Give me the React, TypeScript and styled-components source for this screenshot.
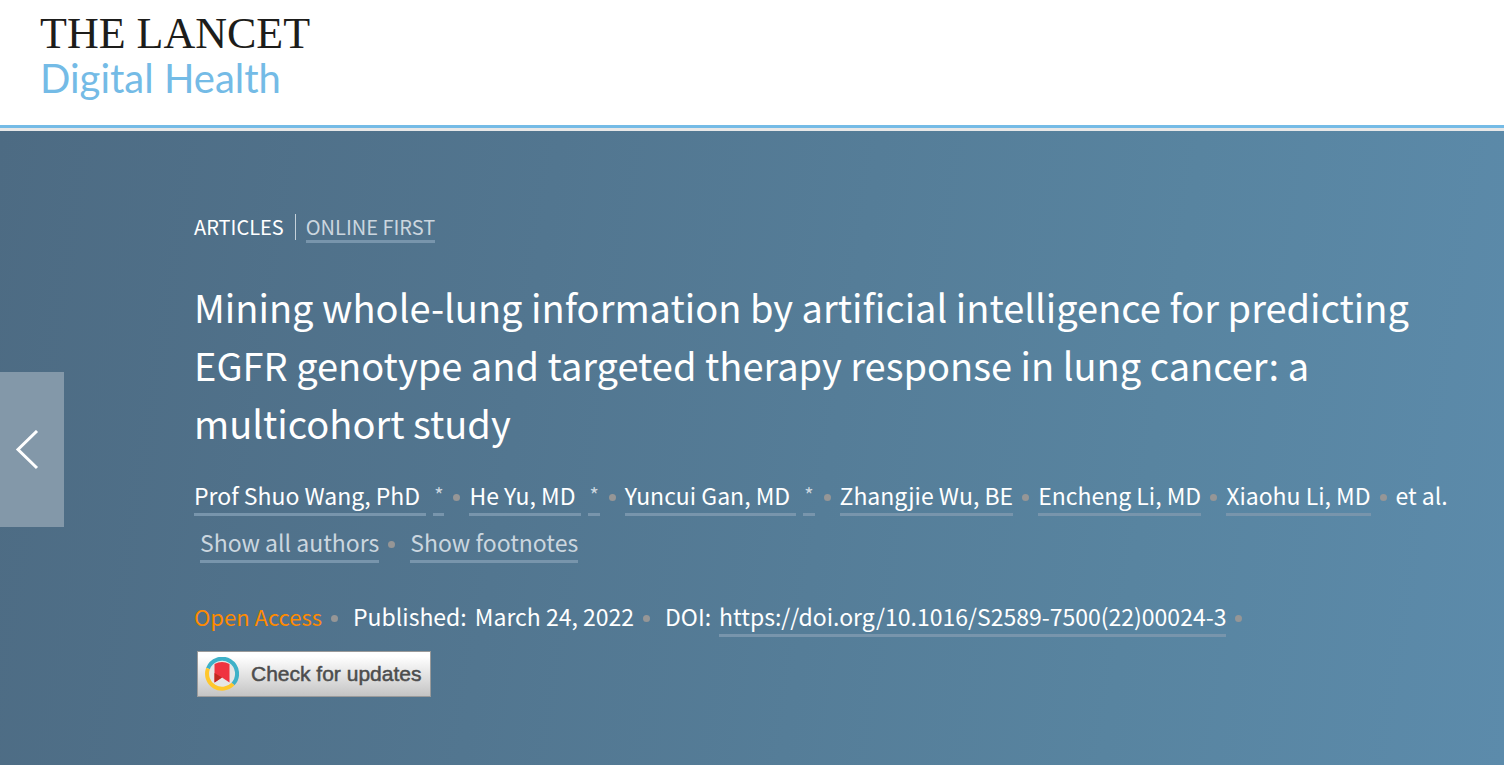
import React from "react";
import styled, { createGlobalStyle } from "styled-components";

const GlobalStyle = createGlobalStyle`
  *, *::before, *::after { box-sizing: border-box; }
  body {
    margin: 0;
    background: #fff;
    font-family: "Noto Sans CJK SC", "Noto Sans", sans-serif;
  }
`;

const Header = styled.header`
  display: flex;
  padding: 12px 40px 24px;
  border-bottom: 3px solid #74bbe6;
`;

const Brand = styled.a`
  display: flex;
  flex-direction: column;
  text-decoration: none;
`;

const BrandName = styled.span`
  font: 44px/44px "Liberation Serif", serif;
  color: #1d1d1b;
`;

const BrandJournal = styled.span`
  font: 40px/45px Lato, sans-serif;
  color: #74bbe6;
`;

const Hero = styled.main`
  position: relative;
  border-top: 3px solid #e8e8e8;
  padding: 83px 48px 68px 194px;
  background: linear-gradient(99deg, #4d6b83 0%, #527690 35%, #5884a0 75%, #5c8bab 100%) padding-box;
  color: #fff;
`;

const PreviousButton = styled.button`
  position: absolute;
  left: 0;
  top: 241px;
  width: 64px;
  height: 155px;
  padding: 0 0 0 15px;
  border: 0;
  background: #8398a9;
  display: flex;
  align-items: center;
  cursor: pointer;
`;

const Kicker = styled.div`
  display: flex;
  align-items: flex-start;
  font-size: 20px;
  line-height: 26px;
`;

const Section = styled.span`
  padding-right: 11px;
  border-right: 1px solid #c5d1da;
  margin-right: 10px;
`;

const TextLink = styled.a<{ $muted?: boolean; $trail?: boolean }>`
  color: ${(p) => (p.$muted ? "#cbd6df" : "#fff")};
  text-decoration: none;
  border-bottom: 3px solid #7895ac;
  padding-right: ${(p) => (p.$trail ? "6px" : "0")};
`;

const Title = styled.h1`
  margin: 35px 0 0;
  font-size: 38px;
  line-height: 58px;
  font-weight: 400;
`;

const Row = styled.ul`
  list-style: none;
  margin: 0;
  padding: 0;
  display: flex;
  flex-wrap: wrap;
  font-size: 23px;
  line-height: 36px;
`;

const Authors = styled(Row)`
  margin-top: 25px;
  row-gap: 8px;
`;

const Meta = styled(Row)`
  margin-top: 35px;
`;

const Item = styled.li<{ $indent?: boolean }>`
  display: flex;
  padding-left: ${(p) => (p.$indent ? "6px" : "0")};
`;

const Dot = styled.span`
  width: 7px;
  height: 7px;
  margin: 17px 9px 0;
  border-radius: 50%;
  background: #969696;
`;

const Star = styled(TextLink)`
  margin-left: 7px;
  padding: 0 1px;
  font-size: 20px;
`;

const OpenAccess = styled.span`
  font-size: 22px;
  color: #ff8a00;
`;

const Label = styled.span`
  margin-right: 8px;
`;

const UpdatesButton = styled.button`
  display: flex;
  align-items: center;
  gap: 12px;
  margin: 14px 0 0 3px;
  width: 234px;
  height: 46px;
  padding: 0 7px;
  border: 1px solid #9a9a9a;
  background: linear-gradient(#fff 10%, #c4c4c4);
  color: #4d4d4d;
  font: 21px/28px "Liberation Sans", Arial, sans-serif;
  -webkit-text-stroke: 0.5px #4d4d4d;
  white-space: nowrap;
  cursor: pointer;

  svg { flex: none; }
`;

const authors = [
  { name: "Prof Shuo Wang, PhD", star: true },
  { name: "He Yu, MD", star: true },
  { name: "Yuncui Gan, MD", star: true },
  { name: "Zhangjie Wu, BE", star: false },
  { name: "Encheng Li, MD", star: false },
  { name: "Xiaohu Li, MD", star: false },
];

const ChevronLeft = () => (
  <svg width="24" height="40" viewBox="0 0 24 40" fill="none" stroke="#fff" strokeWidth="3" aria-hidden="true">
    <path d="M22 1L3 19.500L22 38" />
  </svg>
);

const CrossmarkIcon = () => (
  <svg width="34" height="34" viewBox="0 0 34 34" fill="none" aria-hidden="true">
    <circle cx="17" cy="17" r="13" fill="#e6e6e6" />
    <path d="M3 11.500A15 15 0 1 1 28 27" stroke="#3eb1c8" strokeWidth="4" />
    <path d="M28 27A15 15 0 0 1 3 11.500" stroke="#ffc72c" strokeWidth="4" />
    <path d="M9.500 7Q17 3 24.500 7V25.500L17 20.500L9.500 25.500Z" fill="#ef3340" />
    <path d="M9.500 16L17 20.500L9.500 25.500Z" fill="#c02820" />
  </svg>
);

export default function App() {
  return (
    <>
      <GlobalStyle />
      <Header>
        <Brand href="#">
          <BrandName>THE LANCET</BrandName>
          <BrandJournal>Digital Health</BrandJournal>
        </Brand>
      </Header>
      <Hero>
        <PreviousButton aria-label="Previous article">
          <ChevronLeft />
        </PreviousButton>
        <Kicker>
          <Section>ARTICLES</Section>
          <TextLink href="#" $muted>ONLINE FIRST</TextLink>
        </Kicker>
        <Title>
          Mining whole-lung information by artificial intelligence for predicting EGFR genotype and
          targeted therapy response in lung cancer: a multicohort study
        </Title>
        <Authors>
          {authors.map((a) => (
            <Item key={a.name}>
              <TextLink href="#" $trail={a.star}>{a.name}</TextLink>
              {a.star && <Star href="#" $muted>*</Star>}
              <Dot />
            </Item>
          ))}
          <Item>et al.</Item>
          <Item $indent>
            <TextLink href="#" $muted>Show all authors</TextLink>
            <Dot />
          </Item>
          <Item $indent>
            <TextLink href="#" $muted>Show footnotes</TextLink>
          </Item>
        </Authors>
        <Meta>
          <Item>
            <OpenAccess>Open Access</OpenAccess>
            <Dot />
          </Item>
          <Item $indent>
            <Label>Published:</Label>
            <span>March 24, 2022</span>
            <Dot />
          </Item>
          <Item $indent>
            <Label>DOI:</Label>
            <TextLink href="#">https://doi.org/10.1016/S2589-7500(22)00024-3</TextLink>
            <Dot />
          </Item>
        </Meta>
        <UpdatesButton>
          <CrossmarkIcon />
          Check for updates
        </UpdatesButton>
      </Hero>
    </>
  );
}
